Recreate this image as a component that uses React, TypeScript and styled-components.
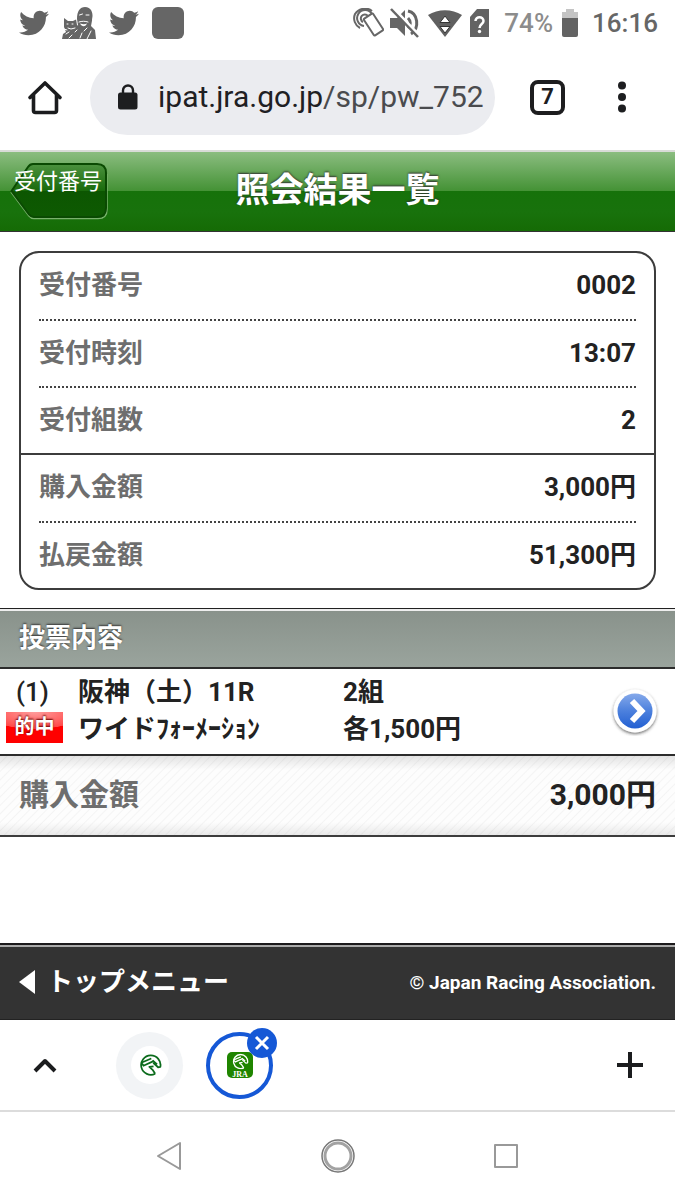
import React from "react";
import styled, { createGlobalStyle, css } from "styled-components";
import { FaTwitter } from "react-icons/fa";

const GlobalStyle = createGlobalStyle`
  * { box-sizing: border-box; }
  body {
    margin: 0;
    background: #fff;
    color: #222;
    font-family: Roboto, "Noto Sans CJK JP", sans-serif;
  }
  button { padding: 0; border: 0; background: none; color: inherit; font: inherit; cursor: pointer; }
  a { color: inherit; text-decoration: none; }
  svg { display: block; flex: none; }
`;

const Screen = styled.div`
  min-height: 100vh;
  display: flex;
  flex-direction: column;
`;

/* ---------- Status bar ---------- */

const StatusBar = styled.div`
  display: flex;
  align-items: center;
  justify-content: space-between;
  height: 46px;
  padding: 0 17px 0 19px;
  color: #636363;
`;

const StatusGroup = styled.div<{ $gap: number }>`
  display: flex;
  align-items: center;
  gap: ${(p) => p.$gap}px;
`;

const StatusText = styled.span<{ $muted?: boolean }>`
  font-size: 26px;
  line-height: 32px;
  font-weight: 500;
  color: ${(p) => (p.$muted ? "#8c8c8c" : "#666")};
`;

const BatteryGroup = styled(StatusGroup)`
  padding: 0 6px 0 7px;
`;

const AppSquare = styled.span`
  width: 32px;
  height: 32px;
  border-radius: 6px;
  background: #666;
`;

/* ---------- Browser toolbar ---------- */

const Toolbar = styled.header`
  display: flex;
  align-items: center;
  height: 106px;
  padding: 0 49px 2px 27px;
  border-bottom: 2px solid #d9dcd8;
`;

const IconButton = styled.button`
  display: flex;
  align-items: center;
  justify-content: center;
  height: 48px;
`;

const AddressBar = styled.a`
  flex: 1;
  min-width: 0;
  display: flex;
  align-items: center;
  gap: 20px;
  height: 75px;
  margin: 0 35px 0 27px;
  padding: 0 10px 0 28px;
  border-radius: 38px;
  background: #ebecf0;
  color: #4a4b4e;
  font-size: 30px;
  line-height: 36px;
  white-space: nowrap;
`;

const Host = styled.span`
  color: #1f2023;
`;

const TabCount = styled.button`
  width: 35px;
  height: 35px;
  margin-right: 53px;
  border: 4px solid #1d1d1f;
  border-radius: 8px;
  font-size: 22px;
  line-height: 26px;
  font-weight: 700;
  color: #1d1d1f;
`;

/* ---------- Page ---------- */

const TitleBar = styled.div`
  display: grid;
  grid-template-columns: 1fr auto 1fr;
  align-items: center;
  height: 80px;
  padding: 0 10px;
  border-bottom: 1px solid #333;
  background: linear-gradient(#8bbd80 0, #449235 39px, #16720a 39px, #18720c 60px, #156b05 100%);
`;

const BackButton = styled.button`
  position: relative;
  justify-self: start;
  width: 98px;
  height: 57px;
  padding: 0 4px 20px 2px;
  color: #fff;
  font-size: 22px;
  line-height: 36px;
  white-space: nowrap;
`;

const BackShape = styled.svg`
  position: absolute;
  inset: 0;
`;

const BackLabel = styled.span`
  position: relative;
`;

const Title = styled.h1`
  margin: 0;
  padding-bottom: 3px;
  color: #fff;
  font-size: 34px;
  line-height: 44px;
  font-weight: 700;
  text-shadow: 0 -1px 2px #333;
`;

const Summary = styled.dl`
  margin: 19px;
  margin-bottom: 18px;
  border: 2px solid #3c3c3c;
  border-radius: 20px;
`;

const SummaryGroup = styled.div`
  padding: 0 18px;
  & + & { border-top: 2px solid #3c3c3c; }
`;

const SummaryRow = styled.div`
  display: flex;
  align-items: center;
  justify-content: space-between;
  height: 66px;
  padding-bottom: 2px;
  font-size: 26px;
  line-height: 36px;
  & + & { height: 67px; border-top: 2px dotted #444; }
`;

const Label = styled.dt`
  color: #6e6e6e;
  font-weight: 700;
`;

const Value = styled.dd`
  margin: 0;
  color: #222;
  font-weight: 700;
`;

const SectionHeading = styled.h2`
  margin: 0;
  height: 61px;
  padding: 0 19px;
  border-top: 1px solid #222;
  border-bottom: 2px solid #2c2c2c;
  background: linear-gradient(#eee 0, #eee 2px, #89928b 2px, #9aa49d 100%);
  color: #fff;
  font-size: 26px;
  line-height: 58px;
  font-weight: 700;
  text-shadow: 0 -1px 2px #333;
`;

const BetRow = styled.a`
  display: grid;
  grid-template-columns: 72px 265px 1fr auto;
  align-items: center;
  padding: 5px 15px 6px 6px;
  border-bottom: 2px solid #2c2c2c;
  font-size: 26px;
  line-height: 37px;
  font-weight: 700;
  white-space: nowrap;
`;

const Cell = styled.div<{ $inset?: boolean }>`
  display: flex;
  flex-direction: column;
  align-items: flex-start;
  ${(p) =>
    p.$inset &&
    css`
      font-weight: 500;
      & > :first-child { padding-left: 10px; }
    `}
`;

const HitBadge = styled.strong`
  width: 57px;
  height: 31px;
  margin: 1px 0 5px;
  background: radial-gradient(ellipse 50px 17px at 50% 0, #ff9c9c 0, #ff4a4a 97%, #f00 100%);
  color: #fff;
  font-size: 20px;
  line-height: 30px;
  font-weight: 700;
  text-align: center;
  text-shadow: 0 -1px 2px #600;
`;

const TotalRow = styled.div`
  display: flex;
  align-items: center;
  justify-content: space-between;
  height: 81px;
  padding: 0 19px 2px;
  border-bottom: 2px solid #3c3c3c;
  font-size: 30px;
  line-height: 40px;
  background:
    linear-gradient(rgba(0, 0, 0, 0.1), transparent 14px, transparent 66px, rgba(0, 0, 0, 0.08)),
    repeating-linear-gradient(135deg, #fdfdfd 0, #fdfdfd 4px, #f4f4f4 5px, #fdfdfd 6px);
`;

const TotalLabel = styled.span`
  color: #6e6e6e;
  font-weight: 700;
`;

const TotalValue = styled.strong`
  font-weight: 700;
`;

const Spacer = styled.div`
  flex: 1;
`;

const PageFooter = styled.footer`
  display: flex;
  align-items: center;
  justify-content: space-between;
  height: 77px;
  padding: 0 19px;
  border-top: 2px solid #1c1a1c;
  border-bottom: 1px solid #222;
  background: linear-gradient(#aaa 0, #aaa 2px, #333 2px);
  color: #fff;
`;

const TopMenuLink = styled.a`
  display: flex;
  align-items: center;
  gap: 12px;
  font-size: 26px;
  line-height: 36px;
  font-weight: 700;
`;

const Copyright = styled.small`
  padding-top: 2px;
  font-size: 19px;
  line-height: 24px;
  font-weight: 700;
`;

/* ---------- Tab strip and system navigation ---------- */

const TabStrip = styled.nav`
  display: flex;
  align-items: center;
  height: 92px;
  padding: 0 31px 0 33px;
  border-bottom: 2px solid #dcdcdc;
`;

const Tabs = styled.div`
  flex: 1;
  display: flex;
  gap: 23px;
  padding-left: 59px;
`;

const Tab = styled.div<{ $active?: boolean }>`
  position: relative;
  display: flex;
  align-items: center;
  justify-content: center;
  width: 67px;
  height: 67px;
  border-radius: 50%;
  background: ${(p) => (p.$active ? "#fff" : "#f2f4f6")};
  border: ${(p) => (p.$active ? "4px solid #1558d6" : "0")};
`;

const TabIcon = styled.button`
  display: flex;
  align-items: center;
  justify-content: center;
  width: 38px;
  height: 38px;
  border-radius: 50%;
  background: #fff;
`;

const CloseTab = styled.button`
  position: absolute;
  top: -8px;
  right: -8px;
  display: flex;
  align-items: center;
  justify-content: center;
  width: 30px;
  height: 30px;
  border-radius: 50%;
  background: #1558d6;
`;

const SystemNav = styled.nav`
  display: flex;
  align-items: center;
  height: 88px;
  padding: 0 12.5%;
`;

const NavButton = styled.button`
  flex: 1;
  display: flex;
  align-items: center;
  justify-content: center;
  height: 48px;
`;

/* ---------- Icons ---------- */

const PortraitIcon = () => (
  <svg width="34" height="32" viewBox="0 0 34 32">
    <path fill="#666" d="M15 12C15 4 18 0 23 0c6 0 8 5 7.500 11l-1.500 8 4 4 1 9H0l1-5 3-2-2-5 0-9 4 3h5Z" />
    <path
      fill="none"
      stroke="#fff"
      strokeWidth="1"
      strokeLinecap="round"
      d="M17.500 8l3-1M24 8l3 0M14.500 12l1 6M17 15c3-1 6-1 9 0M5 17h1M10 17h1M6 21l3 1 4-1M2 22l3 1M4 27l3-2M13 25l2-2M25 21l-3 3M29 24l-4 8M20 26l-2 5M10 28l-3 3"
    />
    <path fill="#fff" d="M18 16.500c3 1 5 1 7 0-1 3-5 4-7 0ZM30 9l1 4-1 1Z" />
  </svg>
);

const NearbyIcon = () => (
  <svg width="31" height="30" viewBox="0 0 31 30" fill="none" stroke="#666">
    <rect x="15" y="6.500" width="11" height="20" rx="1" strokeWidth="2" transform="rotate(-33 20.500 16.500)" />
    <path strokeWidth="2" d="M11 18A8 8 0 1 1 19 6M10 14A4 4 0 1 1 15 8M7 20A11 11 0 0 1 2 6C6 0 14-1 19 3" />
  </svg>
);

const MutedIcon = () => (
  <svg width="30" height="30" viewBox="0 0 30 30" fill="none" stroke="#666" strokeWidth="3">
    <path fill="#666" stroke="none" d="M0 10h7l8-8v26l-8-8H0Z" />
    <path d="M18 10c3 3 3 7 0 10M18 3c10 2 12 17 3 23" />
    <path stroke="#fff" strokeWidth="3" d="M3 0l26 27" />
    <path strokeWidth="2.500" d="M1 1l27 28" />
  </svg>
);

const WifiIcon = () => (
  <svg width="34" height="27" viewBox="0 0 34 27">
    <path fill="#606060" d="M0 5C10-1.500 24-1.500 34 5L17 27Z" />
    <path fill="#fff" stroke="#333" strokeWidth="1" d="M17 6l5 6.500H12ZM17 23l5-6.500H12Z" />
  </svg>
);

const SimIcon = () => (
  <svg width="19" height="28" viewBox="0 0 19 28">
    <path fill="#636363" d="M7 0h12v28H0V8Z" />
    <path fill="none" stroke="#fff" strokeWidth="2.500" d="M5.500 12c0-5 8-5 8 0 0 3-4 3-4 7" />
    <circle cx="9.500" cy="22.500" r="1.700" fill="#fff" />
  </svg>
);

const BatteryIcon = () => (
  <svg width="16" height="28" viewBox="0 0 16 28">
    <path fill="#c4c4c4" d="M4 0h8v3h4v7H0V3h4Z" />
    <path fill="#636363" d="M0 9h16v17q0 2-2 2H2q-2 0-2-2Z" />
  </svg>
);

const HomeIcon = () => (
  <svg width="36" height="36" viewBox="0 0 36 36" fill="none" stroke="#1b1c1e" strokeWidth="3.600" strokeLinecap="round" strokeLinejoin="round">
    <path d="M3 18.500L18 4l15 14.500M6.500 16v15.500q0 2 2 2h19q2 0 2-2V16" />
  </svg>
);

const LockIcon = () => (
  <svg width="20" height="26" viewBox="0 0 20 26">
    <path fill="none" stroke="#1d1e20" strokeWidth="2.400" d="M5 9V6.500a5 5 0 0 1 10 0V9" />
    <rect y="8.500" width="19.500" height="17" rx="2.500" fill="#1d1e20" />
  </svg>
);

const DotsIcon = () => (
  <svg width="8" height="32" viewBox="0 0 8 32" fill="#1d1e20">
    <circle cx="4" cy="4.500" r="4" />
    <circle cx="4" cy="16" r="4" />
    <circle cx="4" cy="27.500" r="4" />
  </svg>
);

const BackPlate = () => (
  <BackShape width="98" height="57" viewBox="0 0 98 57" aria-hidden="true">
    <defs>
      <linearGradient id="plate" x1="0" y1="0" x2="0" y2="1">
        <stop offset="0" stopColor="#4c923f" />
        <stop offset="0.500" stopColor="#1a6b0c" />
        <stop offset="0.510" stopColor="#0c5601" />
        <stop offset="1" stopColor="#0e5a02" />
      </linearGradient>
    </defs>
    <path fill="none" stroke="#79b26c" strokeWidth="1.500" d="M1 29L19 53q2 2.500 5 2.500H88q9 0 9-9V11" />
    <path
      fill="url(#plate)"
      stroke="#0a4a02"
      strokeWidth="2"
      d="M1.500 28L18 4q2-3 5-3H87q9 0 9 9V45q0 9-9 9H24q-3 0-5-2.500Z"
    />
  </BackShape>
);

const ArrowBadge = () => (
  <svg width="50" height="50" viewBox="0 0 50 50">
    <defs>
      <linearGradient id="blue" x1="0" y1="0" x2="0" y2="1">
        <stop offset="0" stopColor="#85a9ea" />
        <stop offset="0.500" stopColor="#4c80dd" />
        <stop offset="1" stopColor="#2360d2" />
      </linearGradient>
      <filter id="lift" x="-20%" y="-20%" width="140%" height="140%">
        <feDropShadow dx="0" dy="1.500" stdDeviation="1.500" floodColor="#333" floodOpacity="0.700" />
      </filter>
    </defs>
    <circle cx="25" cy="25" r="21.500" fill="#fff" filter="url(#lift)" />
    <circle cx="25" cy="25" r="17.500" fill="url(#blue)" />
    <path fill="none" stroke="#fff" strokeWidth="6" d="M22 15l9.500 10L22 35" />
  </svg>
);

const LeftTriangle = () => (
  <svg width="16" height="24" viewBox="0 0 16 24" fill="#fff">
    <path d="M16 0v24L0 12Z" />
  </svg>
);

const EmblemPaths = ({ color }: { color: string }) => (
  <g fill="none" stroke={color} strokeWidth="5.500" strokeLinejoin="round">
    <path d="M52 61A30 30 0 1 1 68 40L61 41L46 27" />
    <path d="M9 27L40 14M14 37L47 22M10 28L16 36" />
    <path d="M47 38L34 40L44 49L52 61M58 32L44 20" />
  </g>
);

const Emblem = () => (
  <svg width="24" height="22" viewBox="0 0 72 68">
    <EmblemPaths color="#0b6b1c" />
  </svg>
);

const JraIcon = () => (
  <svg width="26" height="26" viewBox="0 0 26 26">
    <rect width="26" height="26" rx="5" fill="#1f8500" />
    <svg x="4" y="1.500" width="18" height="16" viewBox="0 0 72 68">
      <EmblemPaths color="#fff" />
    </svg>
    <text x="13" y="24.500" textAnchor="middle" fill="#fff" fontFamily="Liberation Serif, serif" fontSize="8" fontWeight="700">
      JRA
    </text>
  </svg>
);

const StrokeIcon = ({ w, h, d, color = "#1b1c1e", width = 4 }: { w: number; h: number; d: string; color?: string; width?: number }) => (
  <svg width={w} height={h} viewBox={`0 0 ${w} ${h}`} fill="none" stroke={color} strokeWidth={width} strokeLinejoin="round">
    <path d={d} />
  </svg>
);

/* ---------- Data ---------- */

const summary: [string, string][][] = [
  [
    ["受付番号", "0002"],
    ["受付時刻", "13:07"],
    ["受付組数", "2"],
  ],
  [
    ["購入金額", "3,000円"],
    ["払戻金額", "51,300円"],
  ],
];

export default function App() {
  return (
    <Screen>
      <GlobalStyle />
      <StatusBar>
        <StatusGroup $gap={13}>
          <FaTwitter size={30} />
          <PortraitIcon />
          <FaTwitter size={30} />
          <AppSquare />
        </StatusGroup>
        <StatusGroup $gap={8}>
          <StatusGroup $gap={6}>
            <NearbyIcon />
            <MutedIcon />
          </StatusGroup>
          <WifiIcon />
          <SimIcon />
          <BatteryGroup $gap={9}>
            <StatusText $muted>74%</StatusText>
            <BatteryIcon />
          </BatteryGroup>
          <StatusText>16:16</StatusText>
        </StatusGroup>
      </StatusBar>

      <Toolbar>
        <IconButton aria-label="ホーム">
          <HomeIcon />
        </IconButton>
        <AddressBar href="#">
          <LockIcon />
          <span>
            <Host>ipat.jra.go.jp</Host>/sp/pw_752
          </span>
        </AddressBar>
        <TabCount>7</TabCount>
        <IconButton aria-label="メニュー">
          <DotsIcon />
        </IconButton>
      </Toolbar>

      <TitleBar>
        <BackButton>
          <BackPlate />
          <BackLabel>受付番号</BackLabel>
        </BackButton>
        <Title>照会結果一覧</Title>
      </TitleBar>

      <Summary>
        {summary.map((group, i) => (
          <SummaryGroup key={i}>
            {group.map(([label, value]) => (
              <SummaryRow key={label}>
                <Label>{label}</Label>
                <Value>{value}</Value>
              </SummaryRow>
            ))}
          </SummaryGroup>
        ))}
      </Summary>

      <SectionHeading>投票内容</SectionHeading>
      <BetRow href="#">
        <Cell $inset>
          <span>(1)</span>
          <HitBadge>的中</HitBadge>
        </Cell>
        <Cell>
          <span>阪神（土）11R</span>
          <span>ワイドﾌｫｰﾒｰｼｮﾝ</span>
        </Cell>
        <Cell>
          <span>2組</span>
          <span>各1,500円</span>
        </Cell>
        <ArrowBadge />
      </BetRow>
      <TotalRow>
        <TotalLabel>購入金額</TotalLabel>
        <TotalValue>3,000円</TotalValue>
      </TotalRow>

      <Spacer />

      <PageFooter>
        <TopMenuLink href="#">
          <LeftTriangle />
          トップメニュー
        </TopMenuLink>
        <Copyright>© Japan Racing Association.</Copyright>
      </PageFooter>

      <TabStrip>
        <IconButton aria-label="タブ一覧">
          <StrokeIcon w={24} h={16} d="M2 14L12 4l10 10" />
        </IconButton>
        <Tabs>
          <Tab>
            <TabIcon aria-label="タブ 1">
              <Emblem />
            </TabIcon>
          </Tab>
          <Tab $active>
            <TabIcon aria-label="タブ 2">
              <JraIcon />
            </TabIcon>
            <CloseTab aria-label="閉じる">
              <StrokeIcon w={16} h={16} d="M2 2l12 12M14 2L2 14" color="#fff" width={3} />
            </CloseTab>
          </Tab>
        </Tabs>
        <IconButton aria-label="新しいタブ">
          <StrokeIcon w={28} h={28} d="M14 1v26M1 14h26" />
        </IconButton>
      </TabStrip>

      <SystemNav>
        <NavButton aria-label="戻る">
          <StrokeIcon w={26} h={30} d="M24 2v26L2 15Z" color="#999" width={2} />
        </NavButton>
        <NavButton aria-label="ホーム画面">
          <svg width="36" height="36" viewBox="0 0 36 36" fill="none">
            <circle cx="18" cy="18" r="16" stroke="#777" strokeWidth="1.500" />
            <circle cx="18" cy="18" r="13" stroke="#a2a2a2" strokeWidth="3" />
          </svg>
        </NavButton>
        <NavButton aria-label="最近のアプリ">
          <StrokeIcon w={26} h={26} d="M2 2h22v22H2Z" color="#999" width={2} />
        </NavButton>
      </SystemNav>
    </Screen>
  );
}
